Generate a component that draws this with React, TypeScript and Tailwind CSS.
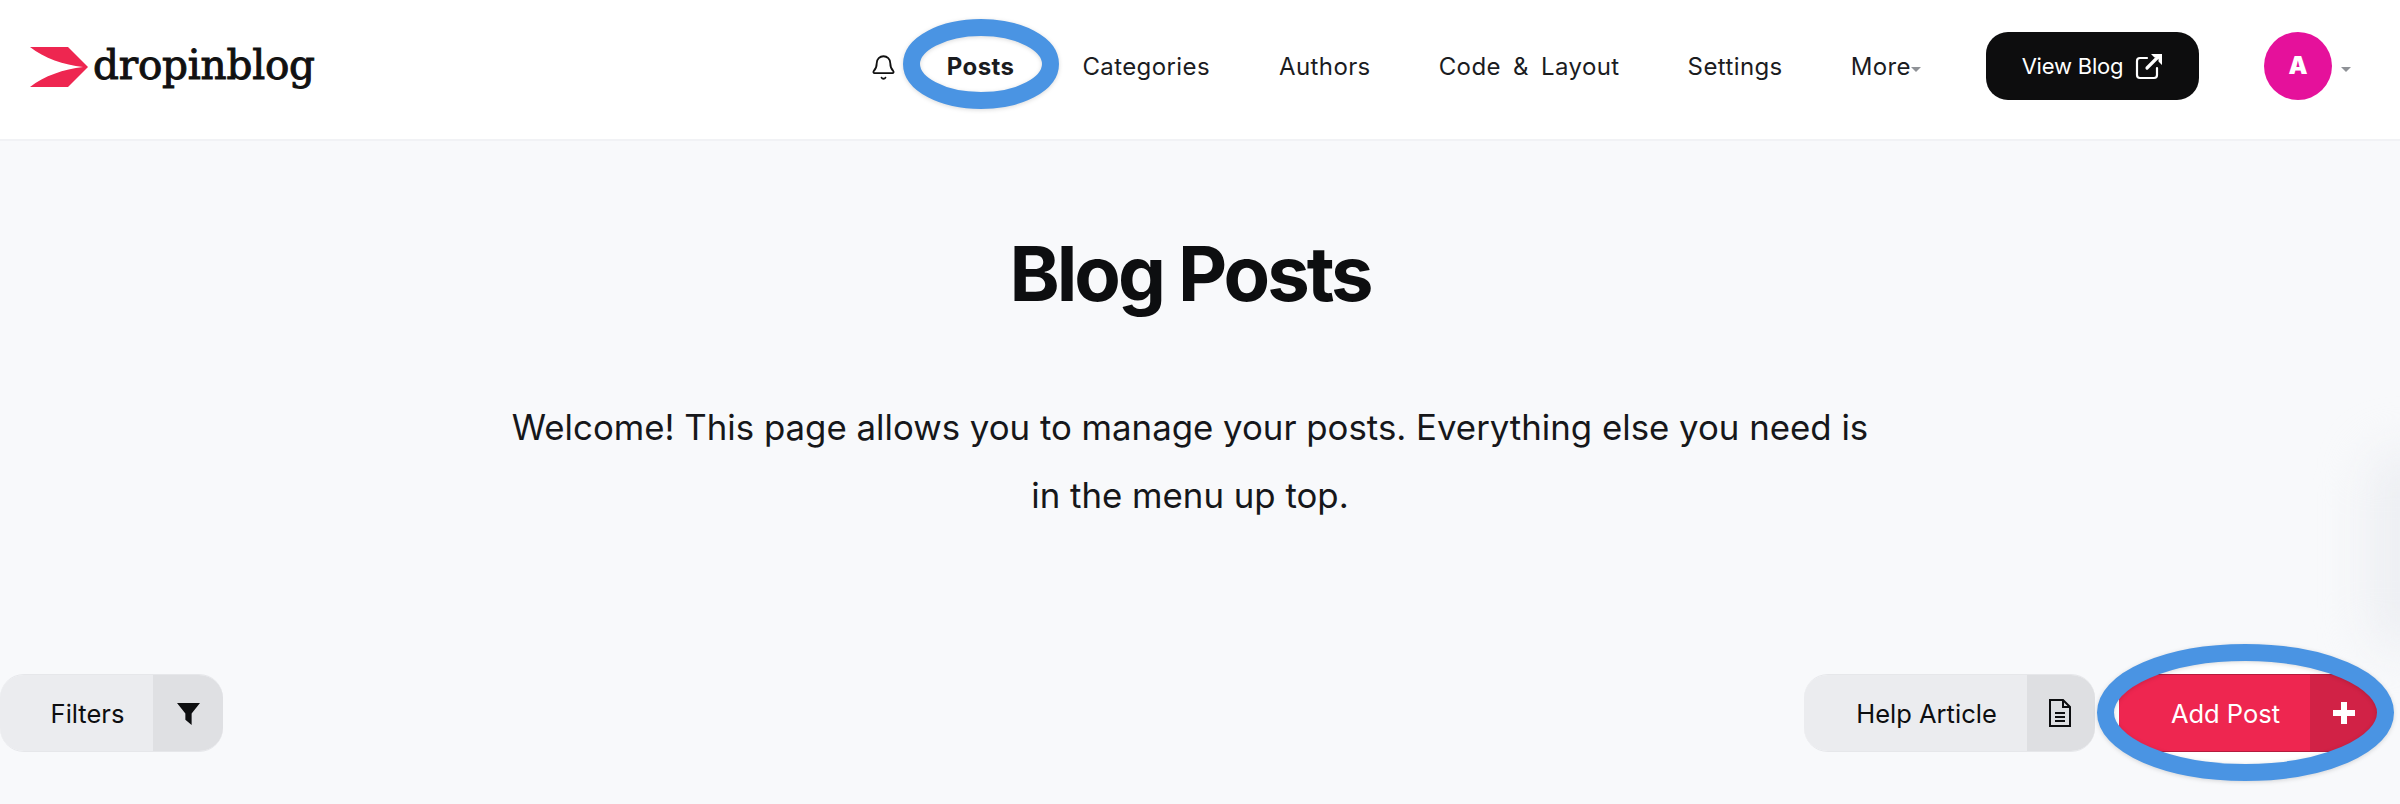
import React from "react";
import { Bell } from "lucide-react";

function Caret({ className = "" }: { className?: string }) {
  return <span className={"inline-block w-0 h-0 border-x-[5px] border-x-transparent border-t-[5px] border-t-[#8f9297] " + className} />;
}

function NavLink({ children, bold }: { children: React.ReactNode; bold?: boolean }) {
  return (
    <span className={"block mt-[2px] text-[24px] leading-[32px] tracking-[0.4px] whitespace-nowrap text-[#1b1c1f] " + (bold ? "font-bold text-[#0b0b0c]" : "")}>
      {children}
    </span>
  );
}

function SplitButton({ label, icon, main, side, text, w, sideW, edge }: { label: string; icon: React.ReactNode; main: string; side: string; text: string; w: string; sideW: string; edge: string }) {
  return (
    <div className={"flex h-[78px] overflow-hidden rounded-[24px] border-y " + w + " " + edge}>
      <div className={"flex-1 flex items-center justify-center pl-[22px] pt-[2px] text-[25.5px] " + main + " " + text}>{label}</div>
      <div className={"flex items-center justify-center " + side + " " + text + " " + sideW}>{icon}</div>
    </div>
  );
}

export default function App() {
  return (
    <div className="relative h-[804px] overflow-hidden bg-[#f8f9fb] font-['Inter',sans-serif]">
      <header className="h-[141px] bg-white border-b-2 border-[#f1f2f5] flex items-center pl-[30px] pr-[49px]">
        <div className="flex items-center gap-[4px] -mt-[6px]">
          <svg width="59" height="40" viewBox="0 0 59 40">
            <path d="M0 0H38L58 20L38 40H0C14 29 34 22 53 20C34 18 14 11 0 0Z" fill="#ee2650" />
          </svg>
          <span className="font-['DejaVu_Serif',serif] text-[40.5px] leading-none text-[#111] [-webkit-text-stroke:1px_#111] tracking-[-0.2px] -mt-[2px]">dropinblog</span>
        </div>
        <nav className="ml-auto flex items-center -mt-[7px]">
          <Bell size={27} strokeWidth={1.6} className="text-[#111] mr-[50px] mt-[2px]" />
          <span className="mr-[68px]"><NavLink bold>Posts</NavLink></span>
          <span className="mr-[69px]"><NavLink>Categories</NavLink></span>
          <span className="mr-[68px]"><NavLink>Authors</NavLink></span>
          <span className="mr-[68px] [word-spacing:5px]"><NavLink>Code &amp; Layout</NavLink></span>
          <span className="mr-[68px]"><NavLink>Settings</NavLink></span>
          <span className="flex items-center mr-[65px]"><NavLink>More</NavLink><Caret className="mt-[6px]" /></span>
          <div className="flex items-center justify-center gap-[12px] w-[213px] h-[68px] rounded-[22px] bg-[#0d0d0e] text-white text-[22px] tracking-[-0.2px]">
            View Blog
            <svg width="28" height="27" viewBox="0 0 28 27" fill="none" stroke="currentColor" strokeLinecap="round">
              <path d="M12 5H5a3 3 0 0 0-3 3v14a3 3 0 0 0 3 3h14a3 3 0 0 0 3-3v-7" strokeWidth="2.2" />
              <path d="M12 15L23 4" strokeWidth="3.2" />
              <path d="M16 1H27V12L23.5 8.5V4.5H19.5Z" fill="currentColor" stroke="none" />
            </svg>
          </div>
          <div className="ml-[65px] w-[68px] h-[68px] rounded-full bg-[#e5119b] flex items-center justify-center text-white font-black text-[24px]">A</div>
          <Caret className="ml-[9px] mt-[6px]" />
        </nav>
      </header>

      <main className="flex flex-col items-center pr-[20px]">
        <h1 className="mt-[86px] text-[76px] leading-[92px] font-bold tracking-[-3px] text-[#0d0e10]">Blog Posts</h1>
        <p className="mt-[74px] w-[1400px] text-center text-[34.8px] leading-[68px] text-[#16171a]">
          Welcome! This page allows you to manage your posts. Everything else you need is
          <br />
          in the menu up top.
        </p>
      </main>

      <div className="absolute right-0 top-[450px] w-[70px] h-[200px] translate-x-[40px] rounded-full bg-[#eceef2] blur-xl" />

      <svg className="absolute left-[2097px] top-[644px]" width="297" height="137" viewBox="0 0 297 137">
        <ellipse cx="148.5" cy="68.5" rx="140" ry="60" fill="#ffffff" />
      </svg>

      <div className="absolute left-0 right-0 top-[674px] flex items-start">
        <SplitButton
          label="Filters"
          icon={<svg width="23" height="23" viewBox="0 0 22 22" fill="currentColor"><path d="M0 1H22L14 11V22L8 17V11Z" /></svg>}
          main="bg-[#ebecef]"
          side="bg-[#dfe0e3]"
          text="text-[#0d0e10]"
          w="w-[223px]"
          sideW="w-[70px]"
          edge="border-[#e6e7ea]"
        />
        <div className="ml-auto flex mr-[22px] gap-[24px]">
          <SplitButton
            label="Help Article"
            icon={<svg className="-ml-[2px]" width="24" height="28" viewBox="0 0 24 28" fill="none" stroke="currentColor" strokeWidth="2"><path d="M2 1H15L22 8V27H2Z" /><path d="M15 1V8H22M7 14H17M7 18H17M7 22H17" /></svg>}
            main="bg-[#ebecef]"
            side="bg-[#dedfe2]"
            text="text-[#0d0e10]"
            w="w-[291px]"
            sideW="w-[68px]"
            edge="border-[#e6e7ea]"
          />
          <SplitButton
            label="Add Post"
            icon={<svg width="22" height="22" viewBox="0 0 22 22" fill="currentColor"><path d="M8 0H14V8H22V14H14V22H8V14H0V8H8Z" /></svg>}
            main="bg-[#ee2650]"
            side="bg-[#d12246]"
            text="text-white"
            w="w-[259px]"
            sideW="w-[68px]"
            edge="border-[#b51b3d]"
          />
        </div>
      </div>

      <svg className="absolute left-[903px] top-[19px] drop-shadow-sm" width="156" height="90" viewBox="0 0 156 90">
        <ellipse cx="78" cy="45" rx="69.5" ry="36.5" fill="none" stroke="#4a94e3" strokeWidth="17" />
      </svg>
      <svg className="absolute left-[2097px] top-[644px] drop-shadow-sm" width="297" height="137" viewBox="0 0 297 137">
        <ellipse cx="148.5" cy="68.5" rx="140" ry="60" fill="none" stroke="#4a94e3" strokeWidth="17" />
      </svg>
    </div>
  );
}
